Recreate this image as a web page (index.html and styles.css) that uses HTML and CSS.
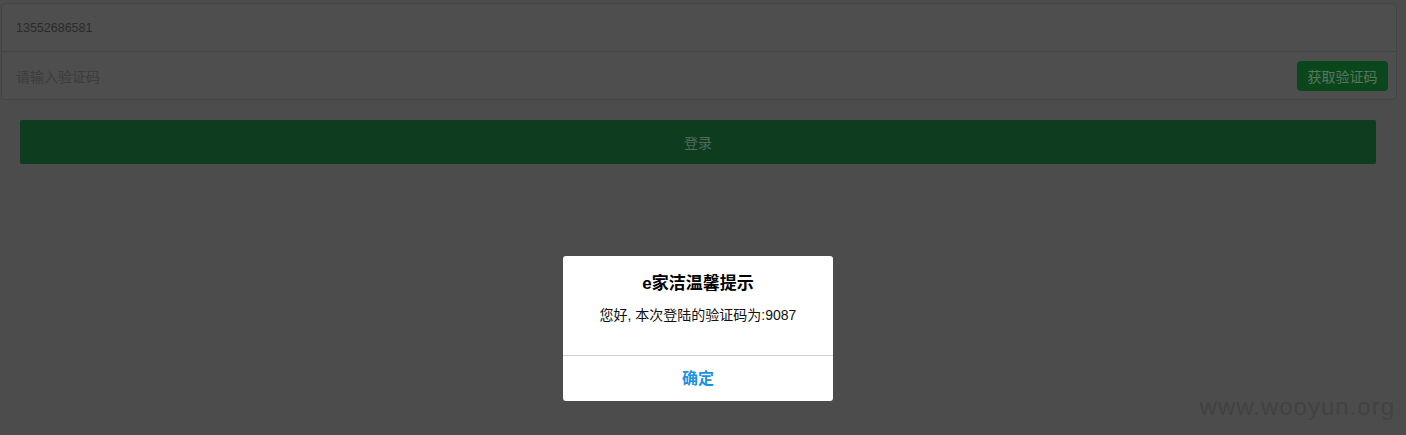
FILE: index.html
```html
<!DOCTYPE html>
<html lang="zh-CN">
<head>
<meta charset="utf-8">
<title>登录</title>
<link rel="stylesheet" href="styles.css">
</head>
<body>
<div class="page">
  <div class="card">
    <div class="row"><span class="value">13552686581</span></div>
    <div class="row"><span class="placeholder">请输入验证码</span><button class="code-btn">获取验证码</button></div>
  </div>
  <button class="login-btn">登录</button>
</div>
<div class="dialog">
  <div class="dialog-body">
    <div class="dialog-title">e家洁温馨提示</div>
    <div class="dialog-msg">您好, 本次登陆的验证码为:9087</div>
  </div>
  <div class="dialog-foot">确定</div>
</div>
<div class="watermark">www.wooyun.org</div>
</body>
</html>
```
FILE: styles.css
```css
html, body {
  margin: 0;
  padding: 0;
  height: 100%;
}
body {
  background: #4c4c4c;
  font-family: "Liberation Sans", "Noto Sans CJK SC", sans-serif;
  overflow: hidden;
}
.page {
  padding-top: 3px;
}
.card {
  margin: 0 9px 0 1px;
  border: 1px solid #444444;
  border-radius: 4px;
  background: #4e4e4e;
}
.row {
  height: 47px;
  display: flex;
  align-items: center;
  justify-content: space-between;
  padding: 0 8px 0 14px;
}
.row + .row {
  border-top: 1px solid #444444;
}
.value {
  font-size: 12.5px;
  color: #2b2b2b;
}
.placeholder {
  font-size: 14px;
  color: #3c3c3c;
}
.code-btn {
  height: 30px;
  width: 91px;
  border: 0;
  border-radius: 4px;
  background: #0b471c;
  color: #5a7660;
  font-family: inherit;
  font-size: 14px;
  padding: 0;
}
.login-btn {
  display: block;
  margin: 20px 30px 0 20px;
  width: calc(100% - 50px);
  height: 44px;
  border: 0;
  border-radius: 2px;
  background: #0e3c1f;
  color: #56695b;
  font-family: inherit;
  font-size: 14px;
  padding: 0;
}
.dialog {
  position: absolute;
  left: 563px;
  top: 256px;
  width: 270px;
  background: #ffffff;
  border-radius: 3px;
  text-align: center;
}
.dialog-body {
  padding: 16px 10px 30px;
  border-bottom: 1px solid #cfcfcf;
}
.dialog-title {
  font-size: 17px;
  line-height: 24px;
  font-weight: bold;
  color: #000;
}
.dialog-msg {
  margin-top: 9px;
  font-size: 14px;
  line-height: 20px;
  color: #111;
}
.dialog-foot {
  height: 45px;
  line-height: 45px;
  font-size: 16px;
  font-weight: bold;
  color: #1b93e3;
}
.watermark {
  position: absolute;
  right: 11px;
  bottom: 14px;
  font-size: 24px;
  letter-spacing: 1px;
  color: #424242;
  line-height: 28px;
}
```
